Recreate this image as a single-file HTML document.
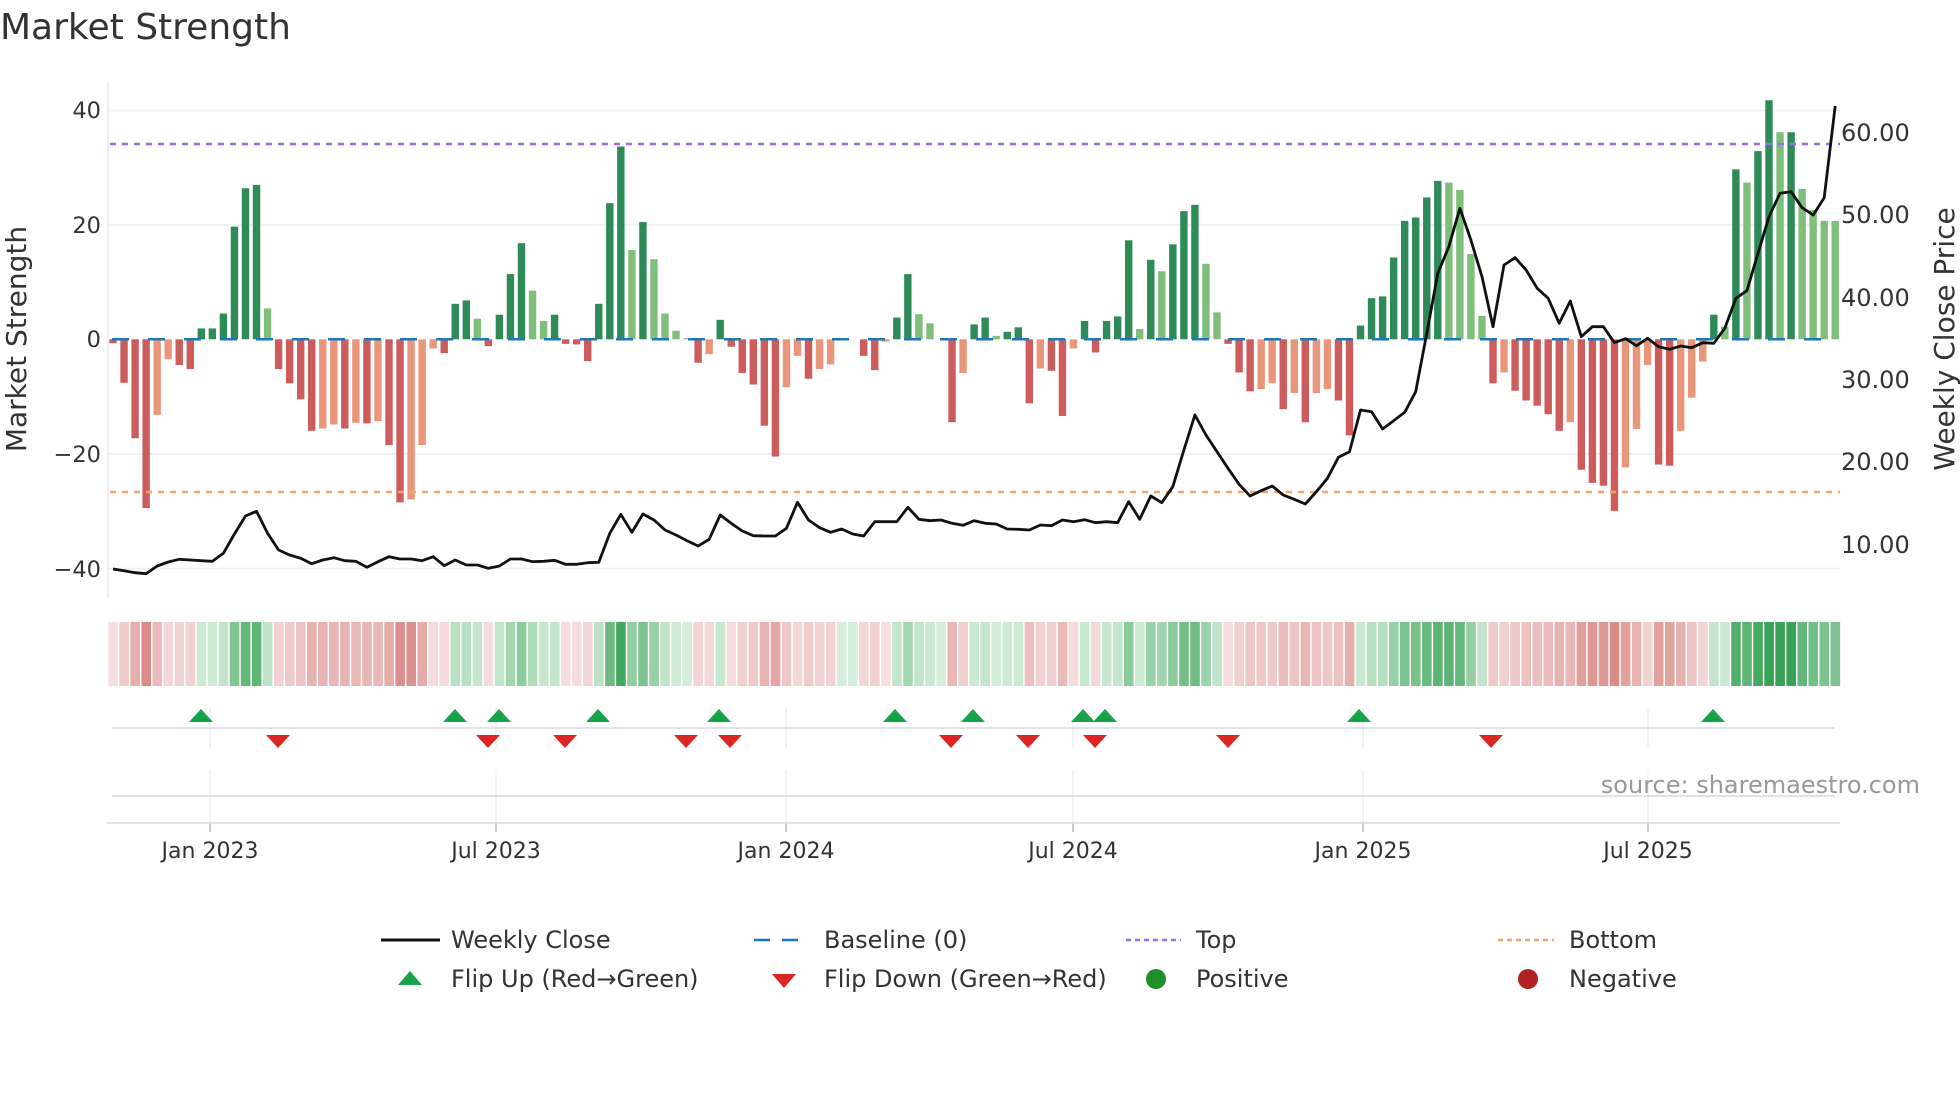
<!DOCTYPE html>
<html><head><meta charset="utf-8"><style>
html,body{margin:0;padding:0;background:#fff;}
svg{display:block;font-family:"DejaVu Sans","Liberation Sans",sans-serif;}
</style></head><body>
<svg id="s" width="1960" height="1102" viewBox="0 0 1960 1102" xmlns="http://www.w3.org/2000/svg">
<rect width="1960" height="1102" fill="#fff"/>
<text x="0" y="39" font-size="36" fill="#333">Market Strength</text>
<g stroke="#eceff4" stroke-width="1.5">
<line x1="108" x2="1840" y1="110.5" y2="110.5"/>
<line x1="108" x2="1840" y1="225" y2="225"/>
<line x1="108" x2="1840" y1="454" y2="454"/>
<line x1="108" x2="1840" y1="568.5" y2="568.5"/>
</g>
<line x1="108" x2="108" y1="81" y2="598" stroke="#e8ebf0" stroke-width="1.5"/>
<g font-size="22.5" fill="#333" text-anchor="end">
<text x="101" y="118">40</text><text x="101" y="233">20</text><text x="101" y="347">0</text>
<text x="101" y="462">−20</text><text x="101" y="577">−40</text>
</g>
<g font-size="24" fill="#333">
<text x="1841" y="141">60.00</text><text x="1841" y="223">50.00</text><text x="1841" y="306">40.00</text>
<text x="1841" y="388">30.00</text><text x="1841" y="470">20.00</text><text x="1841" y="553">10.00</text>
</g>
<text transform="translate(26,339) rotate(-90)" font-size="28" fill="#333" text-anchor="middle">Market Strength</text>
<text transform="translate(1954,339) rotate(-90)" font-size="28" fill="#333" text-anchor="middle">Weekly Close Price</text>
<g id="bars"></g>
<line x1="108" x2="1840" y1="339.3" y2="339.3" stroke="#1f77b4" stroke-width="2.5" stroke-dasharray="17 19" stroke-dashoffset="-4"/>
<line x1="110" x2="1840" y1="144" y2="144" stroke="#9b6ee8" stroke-width="2.5" stroke-dasharray="6 6"/>
<line x1="110" x2="1840" y1="492" y2="492" stroke="#f4a66a" stroke-width="2.5" stroke-dasharray="6 6"/>
<polyline id="price" fill="none" stroke="#111" stroke-width="2.8" stroke-linejoin="round"/>
<g id="strip"></g>
<g stroke="#e8ebf0" stroke-width="1.2" id="vgrid"></g>
<line x1="112" x2="1835" y1="728" y2="728" stroke="#d5d8de" stroke-width="1.5"/>
<line x1="112" x2="1835" y1="796" y2="796" stroke="#d5d8de" stroke-width="1.5"/>
<line x1="107" x2="1840" y1="823" y2="823" stroke="#d5d8de" stroke-width="1.5"/>
<g id="marks"></g>
<g font-size="22" fill="#333" text-anchor="middle" id="xl"></g>
<text x="1920" y="793" font-size="24" fill="#999" text-anchor="end">source: sharemaestro.com</text>
<g font-size="24" fill="#333">
<line x1="381" x2="440" y1="940" y2="940" stroke="#111" stroke-width="3"/>
<text x="451" y="948">Weekly Close</text>
<line x1="754" x2="806" y1="940" y2="940" stroke="#1f77b4" stroke-width="2.5" stroke-dasharray="16 12"/>
<text x="824" y="948">Baseline (0)</text>
<line x1="1126" x2="1181" y1="940" y2="940" stroke="#9b6ee8" stroke-width="2.5" stroke-dasharray="5 4"/>
<text x="1196" y="948">Top</text>
<line x1="1498" x2="1554" y1="940" y2="940" stroke="#f4a66a" stroke-width="2.5" stroke-dasharray="5 4"/>
<text x="1569" y="948">Bottom</text>
<polygon points="398,985 422,985 410,971" fill="#16a34a"/>
<text x="451" y="987">Flip Up (Red→Green)</text>
<polygon points="772,974 796,974 784,988" fill="#dc2626"/>
<text x="824" y="987">Flip Down (Green→Red)</text>
<circle cx="1156" cy="979" r="10" fill="#1e8f2a"/>
<text x="1196" y="987">Positive</text>
<circle cx="1528" cy="979" r="10" fill="#b22222"/>
<text x="1569" y="987">Negative</text>
</g>
</svg>
<script>
var V=[-0.7,-7.6,-17.3,-29.5,-13.2,-3.5,-4.5,-5.2,1.9,1.9,4.5,19.7,26.4,27,5.4,-5.2,-7.7,-10.5,-16,-15.6,-14.9,-15.6,-14.6,-14.7,-14.3,-18.5,-28.5,-28,-18.5,-1.6,-2.4,6.2,6.8,3.6,-1.2,4.3,11.4,16.8,8.5,3.2,
4.3,-0.8,-0.9,-3.8,6.2,23.8,33.7,15.6,20.5,14,4.5,1.5,0.2,-4.1,-2.6,3.4,-1.3,-5.9,-7.9,-15.1,-20.5,-8.4,-2.9,-6.9,-5.2,-4.4,0,0,-2.9,-5.4,-0.4,3.8,11.4,4.4,2.8,0,-14.5,-5.9,2.6,3.8,
0.6,1.3,2.1,-11.2,-5.1,-5.5,-13.4,-1.6,3.2,-2.3,3.2,4,17.3,1.8,13.9,11.9,16.6,22.4,23.5,13.2,4.7,-0.8,-5.8,-9.1,-8.7,-7.7,-12.2,-9.4,-14.5,-9.4,-8.7,-10.7,-16.8,2.4,7.2,7.5,14.3,20.7,21.3,24.8,
27.7,27.4,26.1,14.9,4.1,-7.7,-5.8,-9,-10.7,-11.6,-13.1,-16,-14.5,-22.8,-25.1,-25.6,-30,-22.4,-15.7,-4.5,-21.9,-22.1,-16,-10.2,-3.9,4.3,2.2,29.7,27.4,32.9,41.8,36.2,36.2,26.3,22.6,20.7,20.7];
var T="RRRRrrRRGGGGGGgRRRRrrRrRrRRrrrRGGgRGGGgg"+"GRRRGGGgGggggRrGRRRRRrrRrrRRRRrGGgggRrGG"+"gGGRrRRrGRGGGgGgGGGggRRRrrRrRrrRRGGGGGGG"+"GggggRrRRRRRrRRRRrrrRRrrrGgGgGGgGgggg";
var P=[1467,1472,1478,1481,1458,1446,1438,1440,1442,1444,1420,1362,1308,1294,1360,1410,1425,1435,1451,1440,1433,1442,1444,1462,1445,1430,1437,1437,1442,1430,1457,1440,1455,1455,1465,1458,1437,1437,1445,1444,
1441,1453,1453,1448,1447,1360,1303,1357,1302,1320,1350,1365,1382,1398,1378,1305,1330,1353,1367,1368,1368,1345,1267,1320,1343,1357,1347,1362,1368,1325,1325,1325,1282,1318,1322,1320,1330,1336,1322,1330,
1332,1347,1348,1350,1335,1337,1320,1325,1319,1328,1325,1328,1265,1318,1248,1268,1220,1110,1005,1065,1115,1165,1213,1248,1232,1218,1245,1258,1272,1235,1195,1132,1115,990,995,1047,1022,997,935,760,
580,500,385,480,590,740,555,533,570,625,655,730,663,770,740,740,788,776,797,775,800,808,798,803,788,790,745,655,632,520,410,340,335,383,405,353,78];
var NS="http://www.w3.org/2000/svg";
function el(t,a,p){var e=document.createElementNS(NS,t);for(var k in a)e.setAttribute(k,a[k]);p.appendChild(e);return e;}
var C={G:"#2e8b57",g:"#7fbf7b",R:"#cd5c5c",r:"#e9967a"};
var bars=document.getElementById("bars"),strip=document.getElementById("strip");
function X(i){return 113+i*11.04;}
function mix(a,b,t){var r=[];for(var k=0;k<3;k++)r.push(Math.round(a[k]+(b[k]-a[k])*t));return "rgb("+r.join(",")+")";}
for(var i=0;i<V.length;i++){
 var v=V[i],x=X(i),y0=339.3,h=Math.abs(v)*5.72;
 if(h>0.3) el("rect",{x:x-3.7,y:v>0?y0-h:y0,width:7.4,height:h,fill:C[T[i]]||"#ccc"},bars);
 var t=Math.min(Math.abs(v)/36,1);
 var col=v>=0?mix([214,238,219],[56,163,86],t):mix([246,224,225],[212,122,118],t);
 el("rect",{x:x-4.7,y:622,width:9.6,height:64,fill:col},strip);
}
var pts=[];for(var i=0;i<P.length;i++)pts.push(X(i).toFixed(1)+","+(80+P[i]/3).toFixed(1));
document.getElementById("price").setAttribute("points",pts.join(" "));
var ticks=[[210,"Jan 2023"],[496,"Jul 2023"],[786,"Jan 2024"],[1073,"Jul 2024"],[1363,"Jan 2025"],[1648,"Jul 2025"]];
var vg=document.getElementById("vgrid"),xl=document.getElementById("xl");
ticks.forEach(function(t){
 el("line",{x1:t[0],x2:t[0],y1:708,y2:748},vg);
 el("line",{x1:t[0],x2:t[0],y1:770,y2:822},vg);
 el("line",{x1:t[0],x2:t[0],y1:823,y2:832,stroke:"#bbb","stroke-width":1.5},vg);
 var tx=el("text",{x:t[0],y:858},xl);tx.textContent=t[1];
});
var mk=document.getElementById("marks");
[201,455,499,598,719,895,973,1083,1105,1359,1713].forEach(function(x){
 el("polygon",{points:(x-12)+",722 "+(x+12)+",722 "+x+",709",fill:"#16a34a"},mk);});
[278,488,565,686,730,951,1028,1095,1228,1491].forEach(function(x){
 el("polygon",{points:(x-12)+",735 "+(x+12)+",735 "+x+",748",fill:"#dc2626"},mk);});
</script>
</body></html>
